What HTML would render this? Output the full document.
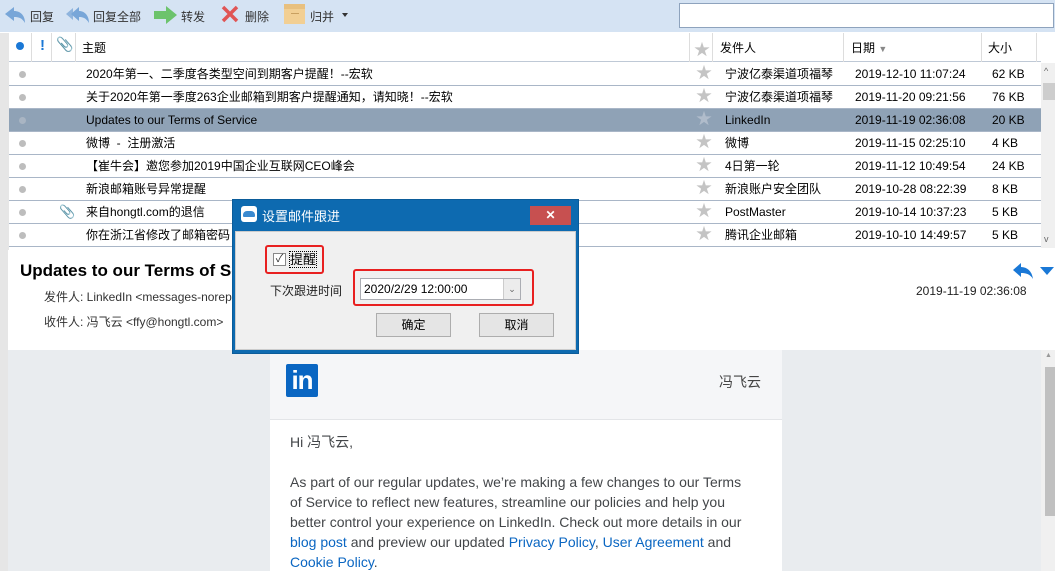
<!DOCTYPE html>
<html><head><meta charset="utf-8"><style>
*{margin:0;padding:0;box-sizing:border-box}
body{width:1055px;height:571px;overflow:hidden;background:#fff;font-family:"Liberation Sans","Noto Sans CJK SC",sans-serif;font-size:12px;color:#000;position:relative}
.abs{position:absolute}
.tb{left:0;top:0;width:1055px;height:32px;background:#d5e3f3}
.tbi{position:absolute;top:8px;font-size:12px;color:#333}
.hdr{top:33px;left:9px;width:1032px;height:29px;background:#fff;border-bottom:1px solid #bfc9d6}
.row{position:absolute;left:9px;width:1032px;height:23px;border-bottom:1px solid #a9b6c7;font-size:12px;line-height:22px}
.row span{position:absolute;top:0;white-space:nowrap}
.dot{position:absolute;left:10px;top:8px;width:7px;height:7px;border-radius:50%;background:#bdbdbd}
.star{color:#c4c4c4;font-size:16px;left:687px}
.sel{background:#8fa2b6}
</style></head><body>
<div class="abs tb"></div>
<svg class="abs" style="left:3px;top:5px" width="24" height="20"><path d="M2 9 L11 2 V6 C18 6 22 11 22 18 C19 13 16 12 11 12 V16 Z" fill="#78a6d8"/></svg>
<div class="tbi" style="left:30px">回复</div>
<svg class="abs" style="left:65px;top:5px" width="26" height="20"><path d="M1 9 L8 3 V15 Z" fill="#8fb4dd"/><path d="M6 9 L14 2 V6 C20 6 24 11 24 18 C21 13 18 12 14 12 V16 Z" fill="#78a6d8"/></svg>
<div class="tbi" style="left:93px">回复全部</div>
<svg class="abs" style="left:153px;top:5px" width="26" height="20"><path d="M1 6 H13 V1 L24 10 L13 19 V14 H1 Z" fill="#6cc36c"/></svg>
<div class="tbi" style="left:181px">转发</div>
<svg class="abs" style="left:220px;top:4px" width="20" height="20"><path d="M3 3 L17 17 M17 3 L3 17" stroke="#e05555" stroke-width="3.5"/></svg>
<div class="tbi" style="left:245px">删除</div>
<div class="abs" style="left:284px;top:4px;width:21px;height:20px;background:#f2cf93"><div style="height:5px;background:#e8c07f"></div><div style="margin:4px auto 0;width:8px;height:1px;background:#c9a060"></div></div>
<div class="tbi" style="left:310px">归并</div>
<div class="abs" style="left:342px;top:13px;border:3px solid transparent;border-top:4px solid #333"></div>
<div class="abs" style="left:679px;top:3px;width:375px;height:25px;background:#fff;border:1px solid #8ea3bd"></div>

<div class="abs" style="left:0;top:33px;width:9px;height:217px;background:#e6e6e6"></div>
<div class="abs hdr">
 <div class="abs" style="left:7px;top:9px;width:8px;height:8px;border-radius:50%;background:#1a78d6"></div>
 <div class="abs" style="left:22px;top:0;width:1px;height:29px;background:#ddd"></div>
 <div class="abs" style="left:31px;top:4px;color:#1a78d6;font-weight:bold;font-size:15px">!</div>
 <div class="abs" style="left:42px;top:0;width:1px;height:29px;background:#ddd"></div>
 <div class="abs" style="left:47px;top:3px;color:#1a78d6;font-size:14px">&#x1F4CE;</div>
 <div class="abs" style="left:66px;top:0;width:1px;height:29px;background:#ddd"></div>
 <div class="abs" style="left:73px;top:6px">主题</div>
 <div class="abs" style="left:680px;top:0;width:1px;height:29px;background:#ddd"></div>
 <div class="abs" style="left:685px;top:3px;color:#c4c4c4;font-size:16px">★</div>
 <div class="abs" style="left:703px;top:0;width:1px;height:29px;background:#ddd"></div>
 <div class="abs" style="left:711px;top:6px">发件人</div>
 <div class="abs" style="left:834px;top:0;width:1px;height:29px;background:#ddd"></div>
 <div class="abs" style="left:842px;top:6px">日期 <span style="color:#888;font-size:9px">▼</span></div>
 <div class="abs" style="left:972px;top:0;width:1px;height:29px;background:#ddd"></div>
 <div class="abs" style="left:979px;top:6px">大小</div>
 <div class="abs" style="left:1027px;top:0;width:1px;height:29px;background:#ddd"></div>
</div>

<div class="row" style="top:63px"><div class="dot"></div><span style="left:77px">2020年第一、二季度各类型空间到期客户提醒！--宏软</span><span class="star">★</span><span style="left:716px">宁波亿泰渠道项福琴</span><span style="left:846px">2019-12-10 11:07:24</span><span style="left:983px">62 KB</span></div>
<div class="row" style="top:86px"><div class="dot"></div><span style="left:77px">关于2020年第一季度263企业邮箱到期客户提醒通知，请知晓！--宏软</span><span class="star">★</span><span style="left:716px">宁波亿泰渠道项福琴</span><span style="left:846px">2019-11-20 09:21:56</span><span style="left:983px">76 KB</span></div>
<div class="row sel" style="top:109px"><div class="dot" style="background:#a9b5c3"></div><span style="left:77px">Updates to our Terms of Service</span><span class="star" style="color:#b0bccb">★</span><span style="left:716px">LinkedIn</span><span style="left:846px">2019-11-19 02:36:08</span><span style="left:983px">20 KB</span></div>
<div class="row" style="top:132px"><div class="dot"></div><span style="left:77px">微博 &nbsp;- &nbsp;注册激活</span><span class="star">★</span><span style="left:716px">微博</span><span style="left:846px">2019-11-15 02:25:10</span><span style="left:983px">4 KB</span></div>
<div class="row" style="top:155px"><div class="dot"></div><span style="left:77px">【崔牛会】邀您参加2019中国企业互联网CEO峰会</span><span class="star">★</span><span style="left:716px">4日第一轮</span><span style="left:846px">2019-11-12 10:49:54</span><span style="left:983px">24 KB</span></div>
<div class="row" style="top:178px"><div class="dot"></div><span style="left:77px">新浪邮箱账号异常提醒</span><span class="star">★</span><span style="left:716px">新浪账户安全团队</span><span style="left:846px">2019-10-28 08:22:39</span><span style="left:983px">8 KB</span></div>
<div class="row" style="top:201px"><div class="dot"></div><span style="left:50px;color:#bbb;font-size:13px">&#x1F4CE;</span><span style="left:77px">来自hongtl.com的退信</span><span class="star">★</span><span style="left:716px">PostMaster</span><span style="left:846px">2019-10-14 10:37:23</span><span style="left:983px">5 KB</span></div>
<div class="row" style="top:224px"><div class="dot"></div><span style="left:77px">你在浙江省修改了邮箱密码</span><span class="star">★</span><span style="left:716px">腾讯企业邮箱</span><span style="left:846px">2019-10-10 14:49:57</span><span style="left:983px">5 KB</span></div>
<div class="abs" style="left:1041px;top:63px;width:14px;height:185px;background:#f0f0f0"></div>
<div class="abs" style="left:1044px;top:66px;color:#666;font-size:9px">^</div>
<div class="abs" style="left:1043px;top:83px;width:12px;height:17px;background:#cdcdcd"></div>
<div class="abs" style="left:1044px;top:234px;color:#666;font-size:9px">v</div>

<div class="abs" style="left:0;top:250px;width:1055px;height:100px;background:#fff"></div>
<div class="abs" style="left:0;top:250px;width:8px;height:321px;background:#e6e6e6"></div>
<div class="abs" style="left:20px;top:261px;font-size:17px;font-weight:bold">Updates to our Terms of Service</div>
<div class="abs" style="left:44px;top:288px;color:#333">发件人: LinkedIn &lt;messages-noreply@linkedin.com&gt;</div>
<div class="abs" style="left:44px;top:313px;color:#333">收件人: 冯飞云 &lt;ffy@hongtl.com&gt;</div>
<div class="abs" style="left:916px;top:284px;color:#222">2019-11-19 02:36:08</div>
<svg class="abs" style="left:1012px;top:262px" width="42" height="18"><path d="M1 8 L9 1 V5 C15 5 20 9 21 17 C18 12 14 11 9 11 V15 Z" fill="#1a78d6"/><path d="M28 5 H42 L35 13 Z" fill="#1a78d6"/></svg>

<div class="abs" style="left:8px;top:350px;width:1033px;height:221px;background:#e9ecef"></div>
<div class="abs" style="left:1041px;top:350px;width:14px;height:221px;background:#f0f0f0"></div>
<div class="abs" style="left:1045px;top:352px;color:#999;font-size:7px">▲</div>
<div class="abs" style="left:1045px;top:367px;width:10px;height:149px;background:#c0c0c0"></div>
<div class="abs" style="left:270px;top:350px;width:512px;height:221px;background:#fff"></div>
<div class="abs" style="left:270px;top:350px;width:512px;height:70px;background:#f5f6f8;border-bottom:1px solid #e3e5e8"></div>
<div class="abs" style="left:286px;top:364px;width:32px;height:33px;background:#0a66c2;border-radius:2px;color:#fff;font-weight:bold;font-size:26px;line-height:32px;text-align:center;letter-spacing:-1px">in</div>
<div class="abs" style="left:719px;top:372px;color:#444;font-size:14px">冯飞云</div>
<div style="position:absolute;left:290px;top:432px;width:466px;font-size:14px;line-height:20px;color:#434649">
Hi 冯飞云,<br><br>
As part of our regular updates, we’re making a few changes to our Terms of Service to reflect new features, streamline our policies and help you better control your experience on LinkedIn. Check out more details in our <span style="color:#0a66c2">blog post</span> and preview our updated <span style="color:#0a66c2">Privacy Policy</span>, <span style="color:#0a66c2">User Agreement</span> and <span style="color:#0a66c2">Cookie Policy</span>.
</div>

<div class="abs" style="left:232px;top:199px;width:347px;height:155px;background:#0d6ab0;border:1px solid #0b5c9a"></div>
<div class="abs" style="left:241px;top:206px;width:16px;height:16px;background:#fff;border-radius:3px"><div style="margin:5px 2px;height:6px;border-radius:4px 4px 1px 1px;background:#3a8ad0"></div></div>
<div class="abs" style="left:262px;top:206px;color:#fff;font-size:13px">设置邮件跟进</div>
<div class="abs" style="left:530px;top:206px;width:41px;height:19px;background:#c75050;color:#fff;text-align:center;font-weight:bold;line-height:19px;font-size:12px">✕</div>
<div class="abs" style="left:235px;top:231px;width:341px;height:119px;background:#f0f0f0;border:1px solid #ccc"></div>
<div class="abs" style="left:265px;top:245px;width:59px;height:29px;border:2px solid #e82020;border-radius:3px"></div>
<div class="abs" style="left:273px;top:253px;width:13px;height:13px;border:1px solid #888;background:#fff;font-size:11px;line-height:11px;text-align:center;color:#333">✓</div>
<div class="abs" style="left:289px;top:251px;font-size:13px;border:1px dotted #000;line-height:15px">提醒</div>
<div class="abs" style="left:270px;top:282px;font-size:12px;color:#222">下次跟进时间</div>
<div class="abs" style="left:353px;top:269px;width:181px;height:37px;border:2px solid #e82020;border-radius:3px"></div>
<div class="abs" style="left:360px;top:278px;width:161px;height:22px;background:#fff;border:1px solid #abadb3;font-size:12px;line-height:20px;padding-left:3px">2020/2/29 12:00:00</div>
<div class="abs" style="left:503px;top:279px;width:17px;height:20px;background:#ececec;border-left:1px solid #ccc;color:#666;font-size:9px;text-align:center;line-height:20px">⌄</div>
<div class="abs" style="left:376px;top:313px;width:75px;height:24px;background:#e5e5e5;border:1px solid #adadad;text-align:center;line-height:22px">确定</div>
<div class="abs" style="left:479px;top:313px;width:75px;height:24px;background:#e5e5e5;border:1px solid #adadad;text-align:center;line-height:22px">取消</div>
</body></html>
